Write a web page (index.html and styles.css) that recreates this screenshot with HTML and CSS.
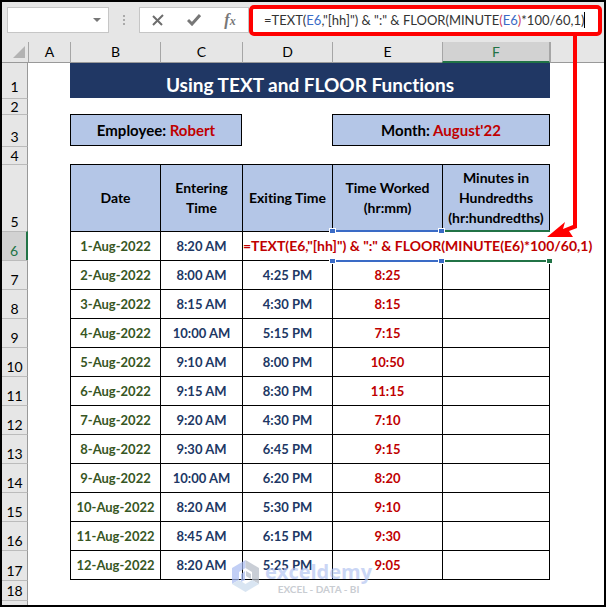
FILE: index.html
```html
<!DOCTYPE html>
<html lang="en">
<head>
    <meta charset="UTF-8">
    <meta name="viewport" content="width=device-width, initial-scale=1.0">
    <title>Using TEXT and FLOOR Functions</title>
    <link rel="stylesheet" href="styles.css">
</head>
<body>
<div class="window">
    <div class="formula-bar">
        <button class="name-box" type="button" aria-label="Name box">
            <svg width="8" height="4" viewBox="0 0 8 4"><path d="M0 0h8L4 4z" fill="#777"/></svg>
        </button>
        <svg class="dots" width="2" height="11" viewBox="0 0 2 11" fill="#aaa"><path d="M0 0h2v2H0zM0 4h2v2H0zM0 8h2v2H0z"/></svg>
        <div class="tools">
            <button type="button" aria-label="Cancel">
                <svg width="12" height="12" viewBox="0 0 12 12" fill="none" stroke="#6d6d6d" stroke-width="2"><path d="M1 2l9 9M11 1L1 11"/></svg>
            </button>
            <button type="button" aria-label="Enter">
                <svg width="14" height="12" viewBox="0 0 14 12" fill="none" stroke="#777" stroke-width="3"><path d="M1 6l4 4L13 1"/></svg>
            </button>
            <button class="fx" type="button" aria-label="Insert function">f<small>x</small></button>
        </div>
        <div class="formula">
            <input type="text" aria-label="Formula" spellcheck="false" value='=TEXT(E6,"[hh]") &amp; ":" &amp; FLOOR(MINUTE(E6)*100/60,1)'>
            <div class="highlight" aria-hidden="true">=TEXT(<span class="ref">E6</span>,"[hh]") &amp; ":" &amp; FLOOR(MINUTE<span class="paren">(</span><span class="ref">E6</span><span class="paren">)</span>*100/60,1)<span class="caret"></span></div>
        </div>
    </div>

    <table class="sheet">
        <colgroup>
            <col class="col-head"><col class="col-a"><col class="col-b"><col class="col-c"><col class="col-d"><col class="col-e"><col class="col-f"><col>
        </colgroup>
        <thead>
            <tr class="letters">
                <th class="corner"><svg width="12" height="12" viewBox="0 0 12 12"><path d="M12 0v12H0z" fill="#b3b3b3"/></svg></th>
                <th>A</th><th>B</th><th>C</th><th>D</th><th>E</th><th class="active">F</th><th></th>
            </tr>
        </thead>
        <tbody>
            <tr class="row-1"><th>1</th><td></td><td class="title" colspan="5">Using TEXT and FLOOR Functions</td><td></td></tr>
            <tr class="row-2"><th>2</th><td colspan="7"></td></tr>
            <tr class="row-3"><th>3</th><td></td><td class="info" colspan="2">Employee: <span>Robert</span></td><td></td><td class="info" colspan="2">Month: <span>August'22</span></td><td></td></tr>
            <tr class="row-4"><th>4</th><td colspan="7"></td></tr>
            <tr class="row-5"><th>5</th><td></td><td class="cell">Date</td><td class="cell">Entering<br>Time</td><td class="cell">Exiting Time</td><td class="cell">Time Worked<br>(hr:mm)</td><td class="cell end">Minutes in<br>Hundredths<br>(hr:hundredths)</td><td></td></tr>
            <tr class="data"><th class="active">6</th><td></td><td class="cell date">1-Aug-2022</td><td class="cell">8:20 AM</td>
                <td class="cell editing" colspan="3">=TEXT(E6,"[hh]") &amp; ":" &amp; FLOOR(MINUTE(E6)*100/60,1)
                    <div class="selection"><span class="range"><i></i><i></i><i></i><i></i></span><span class="target"><i></i></span></div>
                </td><td></td></tr>
            <tr class="data"><th>7</th><td></td><td class="cell date">2-Aug-2022</td><td class="cell">8:00 AM</td><td class="cell">4:25 PM</td><td class="cell worked">8:25</td><td class="cell end"></td><td></td></tr>
            <tr class="data"><th>8</th><td></td><td class="cell date">3-Aug-2022</td><td class="cell">8:15 AM</td><td class="cell">4:30 PM</td><td class="cell worked">8:15</td><td class="cell end"></td><td></td></tr>
            <tr class="data"><th>9</th><td></td><td class="cell date">4-Aug-2022</td><td class="cell">10:00 AM</td><td class="cell">5:15 PM</td><td class="cell worked">7:15</td><td class="cell end"></td><td></td></tr>
            <tr class="data"><th>10</th><td></td><td class="cell date">5-Aug-2022</td><td class="cell">9:10 AM</td><td class="cell">8:00 PM</td><td class="cell worked">10:50</td><td class="cell end"></td><td></td></tr>
            <tr class="data"><th>11</th><td></td><td class="cell date">6-Aug-2022</td><td class="cell">9:15 AM</td><td class="cell">8:30 PM</td><td class="cell worked">11:15</td><td class="cell end"></td><td></td></tr>
            <tr class="data"><th>12</th><td></td><td class="cell date">7-Aug-2022</td><td class="cell">9:20 AM</td><td class="cell">4:30 PM</td><td class="cell worked">7:10</td><td class="cell end"></td><td></td></tr>
            <tr class="data"><th>13</th><td></td><td class="cell date">8-Aug-2022</td><td class="cell">9:30 AM</td><td class="cell">6:45 PM</td><td class="cell worked">9:15</td><td class="cell end"></td><td></td></tr>
            <tr class="data"><th>14</th><td></td><td class="cell date">9-Aug-2022</td><td class="cell">10:00 AM</td><td class="cell">6:20 PM</td><td class="cell worked">8:20</td><td class="cell end"></td><td></td></tr>
            <tr class="data"><th>15</th><td></td><td class="cell date">10-Aug-2022</td><td class="cell">8:20 AM</td><td class="cell">5:30 PM</td><td class="cell worked">9:10</td><td class="cell end"></td><td></td></tr>
            <tr class="data"><th>16</th><td></td><td class="cell date">11-Aug-2022</td><td class="cell">8:45 AM</td><td class="cell">6:15 PM</td><td class="cell worked">9:30</td><td class="cell end"></td><td></td></tr>
            <tr class="data last"><th>17</th><td></td><td class="cell date">12-Aug-2022</td><td class="cell">8:20 AM</td><td class="cell">5:25 PM</td><td class="cell worked">9:05</td><td class="cell end"></td><td></td></tr>
            <tr class="row-18"><th>18</th><td colspan="7"></td></tr>
            <tr class="row-19"><th></th><td colspan="7"></td></tr>
        </tbody>
    </table>

    <!-- arrow from the formula bar to the edited cell -->
    <svg class="arrow" width="40" height="210" viewBox="0 0 40 210" fill="#f00">
        <path d="M27 5h4v194l-8 3 4 6L1 208l18-15-2 7 10-4z"/>
    </svg>

    <div class="watermark">
        <svg width="27" height="32" viewBox="0 0 27 32">
            <path d="M13.500 0L0 8v16l7-4v-8l6.500-4z" fill="#a9bcf2"/>
            <path d="M13.500 0L27 8v16l-7-4v-8l-6.500-4z" fill="#b3bac6"/>
            <path d="M0 24l7-4 6.500 4 6.500-4 7 4-13.500 8z" fill="#c9dbed"/>
            <path d="M9 14l4-3v9l-4 2z" fill="#a9bcf2"/>
            <path d="M14 11l5 3v5l-5-3z" fill="#b3bac6"/>
        </svg>
        <div class="brand">exceldemy<small>EXCEL - DATA - BI</small></div>
    </div>
</div>
</body>
</html>
```

FILE: styles.css
```css
* {
    box-sizing: border-box;
}
body {
    margin: 0;
    font-family: Lato, "Liberation Sans", sans-serif;
    font-size: 14px;
    font-variant-ligatures: none;
    color: #000;
}
.window {
    position: relative;
    min-height: 100vh;
    border: 2px solid #000;
    background-color: #fff;
    overflow: hidden;
}

/* formula bar */
.formula-bar {
    display: flex;
    align-items: center;
    height: 40px;
    padding: 0 2px 4px 5px;
    background-color: #e6e6e6;
}
.name-box {
    display: flex;
    align-items: center;
    justify-content: flex-end;
    width: 102px;
    height: 26px;
    padding: 0 7px;
    border: 1px solid #c6c6c6;
    background-color: #fff;
}
.dots {
    margin: 0 14px;
}
.tools {
    display: flex;
    width: 110px;
    height: 26px;
    border: 1px solid #c6c6c6;
    background-color: #fff;
}
.tools button {
    display: flex;
    flex: 1;
    align-items: center;
    justify-content: center;
    padding: 0;
    border: 0;
    background: none;
}
.tools .fx {
    align-items: baseline;
    font: italic bold 16px/24px "Liberation Serif", serif;
    color: #777;
}
.fx small {
    font-size: 12px;
}
.formula {
    position: relative;
    flex: 1;
    height: 31px;
    border: 4px solid #f00;
    border-radius: 5px;
    background-color: #fff;
}
.formula input {
    width: 100%;
    height: 23px;
    padding: 0 0 0 11px;
    border: 0;
    outline: 0;
    background: none;
    font: inherit;
    font-size: 13px;
    color: transparent;
    caret-color: #000;
}
.highlight {
    position: absolute;
    inset: 0;
    padding-left: 11px;
    font-size: 13px;
    line-height: 23px;
    white-space: pre;
    color: #333;
    pointer-events: none;
}
.ref {
    color: #3a6bc6;
}
.paren {
    color: #d0405a;
}
.caret {
    border-right: 1px solid #000;
}

/* sheet */
.sheet {
    width: 100%;
    table-layout: fixed;
    border-collapse: separate;
    border-spacing: 0;
}
.col-head { width: 26px; }
.col-a { width: 42px; }
.col-b { width: 90px; }
.col-c { width: 82px; }
.col-d { width: 90px; }
.col-e { width: 110px; }
.col-f { width: 108px; }
.sheet th,
.sheet td {
    padding: 0;
}
.sheet th {
    background-color: #e6e6e6;
    font-weight: normal;
}
.letters th {
    height: 21px;
    border-left: 1px solid #a6a6a6;
    border-bottom: 1px solid #999;
    line-height: 18px;
}
.letters .corner {
    padding: 4px 3px 0 0;
    border-left: 0;
    line-height: 0;
    text-align: right;
    vertical-align: top;
}
.letters .active {
    border-right: 1px solid #a6a6a6;
    border-bottom: 2px solid #217346;
}
.sheet .active {
    background-color: #d2d2d2;
    color: #217346;
}
tbody th {
    border-top: 1px solid #bbb;
    border-right: 1px solid #999;
    line-height: 18px;
    vertical-align: bottom;
}
tbody .active {
    border-right: 2px solid #217346;
}
.row-1 { height: 35px; }
.row-1 th { border-top: 0; line-height: 22px; }
.row-2 { height: 16px; }
.row-2 th { line-height: 15px; }
.row-3 { height: 32px; }
.row-4 { height: 18px; }
.row-4 th { line-height: 17px; }
.row-5 { height: 67px; }
.data { height: 29px; }
.last { height: 30px; }
.row-18 { height: 20px; }
.row-19 { height: 5px; }
.sheet .title {
    padding-top: 8px;
    background-color: #203764;
    color: #fff;
    font-size: 19px;
    font-weight: bold;
    line-height: 26px;
    text-align: center;
}
.info {
    border: 1px solid #000;
    background-color: #b4c6e7;
    font-size: 15px;
    font-weight: bold;
    text-align: center;
}
.info span {
    color: #c00000;
}
.cell {
    border-top: 1px solid #000;
    border-left: 1px solid #000;
    font-size: 13px;
    font-weight: bold;
    line-height: 20px;
    text-align: center;
    color: #203764;
}
.end {
    border-right: 1px solid #000;
}
.last .cell {
    border-bottom: 1px solid #000;
}
.row-5 .cell {
    background-color: #b4c6e7;
    font-size: 14px;
    color: #000;
}
.date {
    color: #375623;
}
.worked,
.editing {
    color: #c00000;
}
.editing {
    position: relative;
    font-size: 14px;
    text-align: left;
    white-space: nowrap;
}

/* borders around the referenced cell and the edited cell */
.selection {
    position: absolute;
    top: -2px;
    right: 0;
    bottom: -2px;
    display: flex;
}
.range,
.target {
    position: relative;
    width: 110px;
    border-top: 2px solid #3a6bc6;
    border-bottom: 2px solid #3a6bc6;
}
.target {
    width: 108px;
    border-color: #217346;
}
.range {
    z-index: 1;
}
.selection i {
    position: absolute;
    width: 7px;
    height: 6px;
    border: 1px solid #fff;
    background-color: #3a6bc6;
}
.range i:nth-child(1) { top: -4px; left: -3px; }
.range i:nth-child(2) { top: -4px; right: -3px; }
.range i:nth-child(3) { bottom: -4px; left: -3px; }
.range i:nth-child(4) { bottom: -4px; right: -3px; }
.target i {
    right: -3px;
    bottom: -4px;
}
.selection .target i {
    background-color: #217346;
}

.arrow {
    position: absolute;
    top: 27px;
    left: 544px;
}
.watermark {
    position: absolute;
    top: 558px;
    left: 230px;
    display: flex;
    gap: 6px;
    opacity: 0.7;
}
.brand {
    font: bold 20px/24px "Open Sans", sans-serif;
    color: #b5c5f2;
}
.brand small {
    display: block;
    font: bold 10px/10px Lato, sans-serif;
    text-align: center;
    color: #b3b8bf;
}
```
